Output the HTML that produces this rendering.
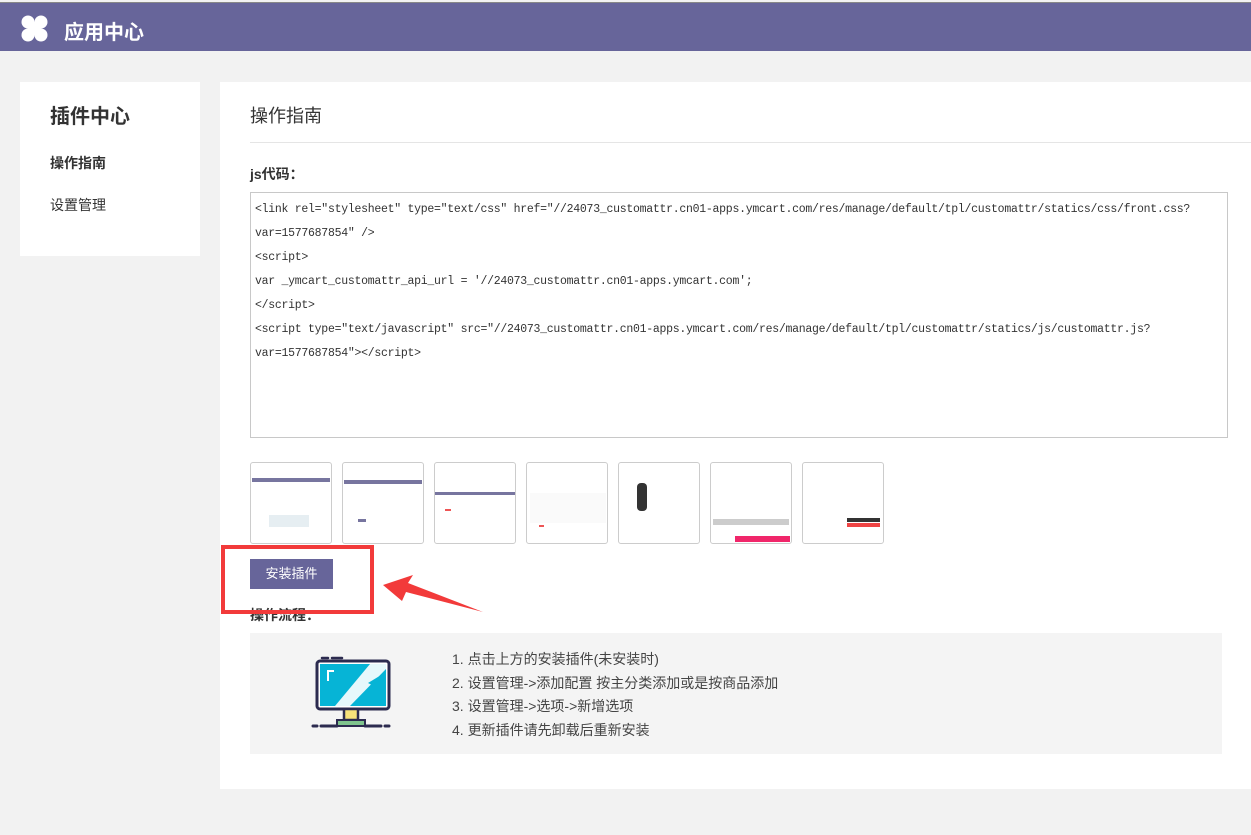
<!DOCTYPE html>
<html><head><meta charset="utf-8"><style>
*{margin:0;padding:0;box-sizing:border-box}
body{width:1251px;height:835px;background:#f2f2f2;font-family:"Liberation Sans","Noto Sans CJK SC",sans-serif;color:#333;position:relative;overflow:hidden}
.top{position:absolute;left:0;top:2px;width:1251px;height:49px;background:#67659a;border-top:1px solid #888}
.top .t{position:absolute;left:64px;top:13px;color:#fff;font-size:20px;font-weight:bold}
.side{position:absolute;left:20px;top:82px;width:180px;height:174px;background:#fff}
.main{position:absolute;left:220px;top:82px;width:1031px;height:707px;background:#fff}
.abs{position:absolute}
.code{position:absolute;left:250px;top:192px;width:978px;height:246px;border:1px solid #c8c8c8;font-family:"Liberation Mono","Noto Sans CJK SC",monospace;font-size:11.5px;line-height:24px;padding:5px 0 0 4px;color:#333;letter-spacing:-0.27px;white-space:pre;overflow:hidden}
.th{position:absolute;top:462px;width:82px;height:82px;border:1px solid #ccc;border-radius:3px;background:#fff}
.btn{position:absolute;left:250px;top:559px;width:83px;height:30px;background:#67659a;color:#fff;font-size:13px;text-align:center;line-height:30px}
.red{position:absolute;left:221px;top:545px;width:153px;height:69px;border:4px solid #f23a3a}
.grey{position:absolute;left:250px;top:633px;width:972px;height:121px;background:#f4f4f4}
.steps{position:absolute;left:452px;top:648px;font-size:14px;line-height:23.6px;color:#444}
</style></head><body>
<div class="top">
<svg class="abs" style="left:21px;top:12px" width="27" height="27" viewBox="0 0 27 27" fill="#fff"><circle cx="7" cy="7" r="6.5"/><circle cx="20" cy="7" r="6.5"/><circle cx="7" cy="20" r="6.5"/><circle cx="20" cy="20" r="6.5"/><rect x="7" y="7" width="13" height="13"/></svg>
<div class="t">应用中心</div></div>
<div class="side">
<div class="abs" style="left:30px;top:18px;font-size:20px;font-weight:bold">插件中心</div>
<div class="abs" style="left:30px;top:71px;font-size:14px;font-weight:bold">操作指南</div>
<div class="abs" style="left:30px;top:113px;font-size:14px">设置管理</div>
</div>
<div class="main">
<div class="abs" style="left:30px;top:20px;font-size:18px">操作指南</div>
<div class="abs" style="left:30px;top:60px;width:1001px;height:1px;background:#e5e5e5"></div>
<div class="abs" style="left:30px;top:82px;font-size:14px;font-weight:bold">js代码：</div>
</div>
<div class="code">&lt;link rel="stylesheet" type="text/css" href="//24073_customattr.cn01-apps.ymcart.com/res/manage/default/tpl/customattr/statics/css/front.css?
var=1577687854" /&gt;
&lt;script&gt;
var _ymcart_customattr_api_url = '//24073_customattr.cn01-apps.ymcart.com';
&lt;/script&gt;
&lt;script type="text/javascript" src="//24073_customattr.cn01-apps.ymcart.com/res/manage/default/tpl/customattr/statics/js/customattr.js?
var=1577687854"&gt;&lt;/script&gt;</div>
<div class="th" style="left:250px"><div class="abs" style="left:1px;top:15px;width:78px;height:4px;background:#77759f"></div><div class="abs" style="left:18px;top:52px;width:40px;height:12px;background:#e6eef2"></div></div>
<div class="th" style="left:342px"><div class="abs" style="left:1px;top:17px;width:78px;height:4px;background:#77759f"></div><div class="abs" style="left:15px;top:56px;width:8px;height:3px;background:#77759f"></div></div>
<div class="th" style="left:434px"><div class="abs" style="left:0;top:29px;width:80px;height:3px;background:#77759f"></div><div class="abs" style="left:10px;top:46px;width:6px;height:2px;background:#e55"></div></div>
<div class="th" style="left:526px"><div class="abs" style="left:3px;top:30px;width:76px;height:30px;background:#fafafa"></div><div class="abs" style="left:12px;top:62px;width:5px;height:2px;background:#e55"></div></div>
<div class="th" style="left:618px"><div class="abs" style="left:18px;top:20px;width:10px;height:28px;background:#333;border-radius:4px"></div></div>
<div class="th" style="left:710px"><div class="abs" style="left:2px;top:56px;width:76px;height:6px;background:#ccc"></div><div class="abs" style="left:24px;top:73px;width:55px;height:6px;background:#f0266a"></div></div>
<div class="th" style="left:802px"><div class="abs" style="left:44px;top:55px;width:33px;height:4px;background:#333"></div><div class="abs" style="left:44px;top:60px;width:33px;height:4px;background:#e44"></div></div>
<div class="btn">安装插件</div>
<div class="abs" style="left:250px;top:605px;font-size:14px;font-weight:bold">操作流程：</div>
<div class="red"></div>
<svg class="abs" style="left:380px;top:570px" width="110" height="50" viewBox="0 0 110 50"><polygon points="3,15 33,5 28,13 103,42 26,22 22,31" fill="#f23a3a"/></svg>
<div class="grey">
<svg class="abs" style="left:60px;top:22px" width="90" height="78" viewBox="0 0 90 78">
<rect x="7" y="6" width="72" height="48" rx="3" fill="#fff" stroke="#2c2b4f" stroke-width="3"/>
<rect x="10" y="9" width="66" height="42" fill="#06b4d6"/>
<polygon points="60,9 76,9 76,14 40,51 25,51" fill="#fff" opacity=".9"/>
<polygon points="58,28 76,17 76,22 62,30" fill="#06b4d6"/>
<path d="M18 26V16h6" stroke="#fff" stroke-width="2" fill="none"/>
<rect x="34" y="54" width="14" height="11" fill="#f7e27a" stroke="#2c2b4f" stroke-width="2.5"/>
<rect x="27" y="65" width="28" height="6" fill="#7fc48d" stroke="#2c2b4f" stroke-width="2"/>
<path d="M3 71h4M11 71h16M55 71h16M75 71h4" stroke="#2c2b4f" stroke-width="3" stroke-linecap="round"/>
<path d="M12 3h6M22 3h10" stroke="#2c2b4f" stroke-width="2.5" stroke-linecap="round"/>
</svg>
</div>
<div class="steps">1. 点击上方的安装插件(未安装时)<br>2. 设置管理-&gt;添加配置 按主分类添加或是按商品添加<br>3. 设置管理-&gt;选项-&gt;新增选项<br>4. 更新插件请先卸载后重新安装</div>
</body></html>
